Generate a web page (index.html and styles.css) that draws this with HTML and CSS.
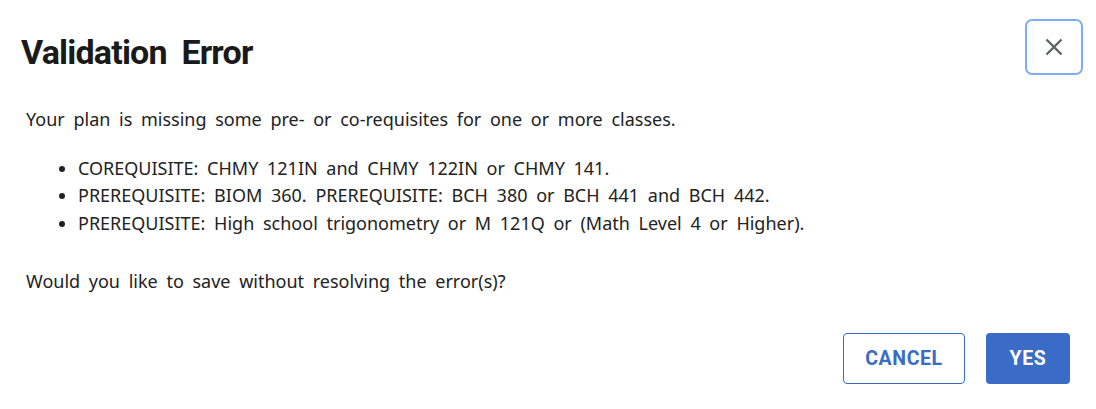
FILE: index.html
```html
<!DOCTYPE html>
<html>
<head>
<meta charset="utf-8">
<link rel="stylesheet" href="styles.css">
</head>
<body>
<div class="dialog">
  <div class="header">
    <h2 class="title">Validation Error</h2>
    <button class="close" aria-label="Close">
      <svg width="20" height="20" viewBox="0 0 20 20"><path d="M2.5 2.5 L17.5 17.5 M17.5 2.5 L2.5 17.5" stroke="#5f6368" stroke-width="2.4" fill="none"/></svg>
    </button>
  </div>
  <div class="content">
    <p class="intro">Your plan is missing some pre- or co-requisites for one or more classes.</p>
    <ul class="list">
      <li>COREQUISITE: CHMY 121IN and CHMY 122IN or CHMY 141.</li>
      <li>PREREQUISITE: BIOM 360. PREREQUISITE: BCH 380 or BCH 441 and BCH 442.</li>
      <li>PREREQUISITE: High school trigonometry or M 121Q or (Math Level 4 or Higher).</li>
    </ul>
    <p class="question">Would you like to save without resolving the error(s)?</p>
  </div>
  <div class="actions">
    <button class="btn btn-outline">CANCEL</button>
    <button class="btn btn-primary">YES</button>
  </div>
</div>
</body>
</html>
```
FILE: styles.css
```css
html, body { margin: 0; padding: 0; background: #fff; }
body { font-family: "Noto Sans", "Open Sans", sans-serif; color: #222; }
.dialog { width: 1096px; height: 409px; box-sizing: border-box; padding: 19px 13px 0 21px; }
.header { display: flex; justify-content: space-between; align-items: flex-start; }
.title { margin: 15px 0 0 0; font-family: Roboto, sans-serif; font-weight: 700; font-size: 34px; letter-spacing: -0.8px; word-spacing: 7px; color: #1a1a1a; line-height: 36px; }
.close { width: 58px; height: 56px; border: 2px solid #7fadf3; border-radius: 7px; background: #fff; display: flex; align-items: center; justify-content: center; padding: 0; }
.content { padding-left: 5px; font-size: 18px; word-spacing: 4px; line-height: 27.5px; }
.intro { margin: 31px 0 0 0; }
.list { margin: 21px 0 0 0; padding-left: 52px; }
.question { margin: 31px 0 0 0; }
.actions { display: flex; justify-content: flex-end; gap: 21px; margin-top: 37px; padding-right: 13px; }
.btn { height: 51px; font-family: Roboto, sans-serif; font-weight: 700; font-size: 19.5px; letter-spacing: 0.6px; border-radius: 4px; box-sizing: border-box; }
.btn-outline { width: 122px; background: #fff; border: 1px solid #3a6bc6; color: #3a6bc6; }
.btn-primary { width: 84px; background: #3a6bc6; border: none; color: #fff; }
```
